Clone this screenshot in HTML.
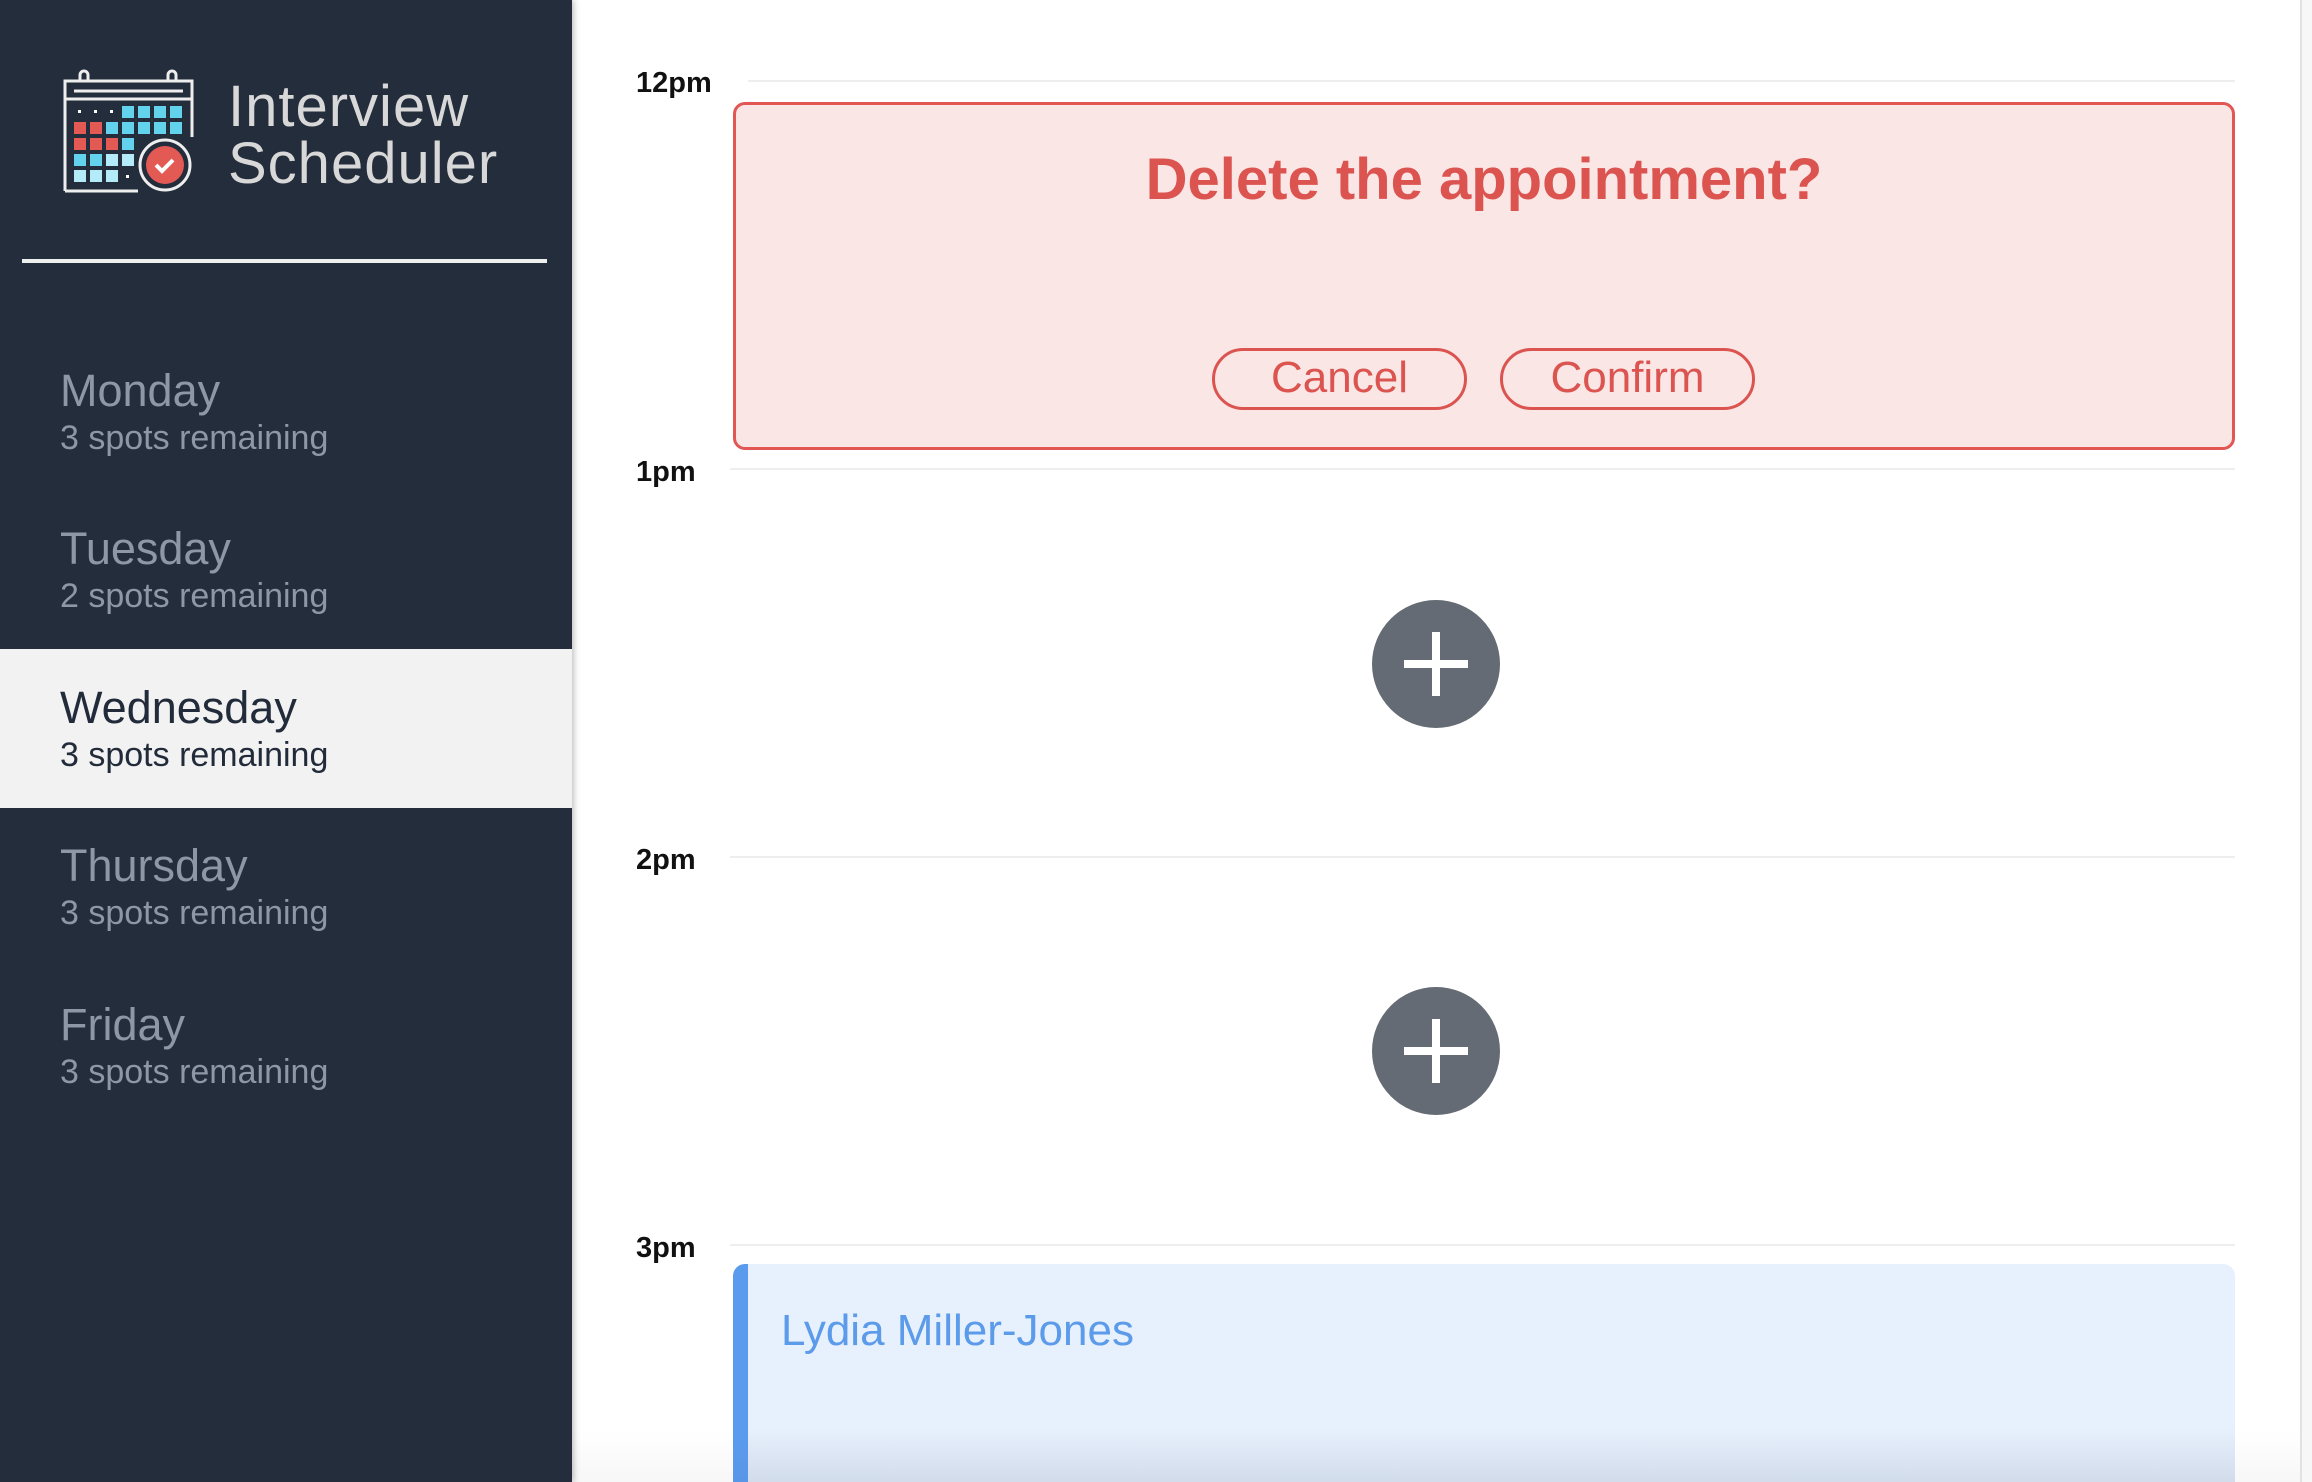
<!DOCTYPE html>
<html style="overflow:hidden"><head><meta charset="utf-8"><style>
*{margin:0;padding:0;box-sizing:border-box}
html,body{width:2312px;height:1482px;overflow:hidden}
body{background:#fff;font-family:"Liberation Sans",sans-serif;position:relative}
.side{position:absolute;left:0;top:0;width:572px;height:1482px;background:#242d3c;box-shadow:2px 0 6px rgba(0,0,0,.25)}
.logo-t{position:absolute;left:228px;top:78px;color:#d8d8d8;font-size:58px;line-height:57px;letter-spacing:1px}
.div{position:absolute;left:22px;top:259px;width:525px;height:4px;background:#eef0f0}
.day{position:absolute;left:0;width:572px;height:159px}
.day .n{position:absolute;left:60px;top:33px;font-size:45px;color:#8e97a5}
.day .s{position:absolute;left:60px;top:87px;font-size:34px;color:#8e97a5}
.day.act{background:#f2f2f2}
.day.act .n{color:#222b3a}.day.act .s{color:#222b3a}
.t{position:absolute;font-weight:bold;font-size:29px;color:#111}
.hl{position:absolute;left:730px;width:1505px;height:2px;background:#eeeeee}
.del{position:absolute;left:733px;top:102px;width:1502px;height:348px;border:3px solid #e05753;border-radius:12px;background:#fae6e5}
.del h1{position:absolute;left:0;right:0;top:41px;text-align:center;font-size:58px;color:#dc5450;font-weight:bold}
.btn{position:absolute;top:243px;width:255px;height:62px;border:3px solid #dc5450;border-radius:31px;color:#dc5450;font-size:44px;text-align:center;line-height:54px}
.plus{position:absolute;left:1372px;width:128px;height:128px;border-radius:50%;background:#656b74}
.plus:before{content:"";position:absolute;left:32px;top:60px;width:64px;height:8px;background:#fff}
.plus:after{content:"";position:absolute;left:60px;top:32px;width:8px;height:64px;background:#fff}
.appt{position:absolute;left:733px;top:1264px;width:1502px;height:218px;background:linear-gradient(#e7f0fd 75%,#d8e3f2);border-left:15px solid #5b9bee;border-radius:12px 12px 0 0}
.appt div{position:absolute;left:33px;top:42px;font-size:44px;color:#5b9bea}
.sb{position:absolute;left:2300px;top:0;width:12px;height:1482px;background:#f7f7f7;border-left:2px solid #e2e2e2}
</style></head><body>
<div class="side">
<svg style="position:absolute;left:0;top:0" width="230" height="230">
<g fill="none" stroke="#eee" stroke-width="3">
<path d="M65 191V81H192V137"/><path d="M65 191H138"/><path d="M74 91H183"/><path d="M65 99H192"/>
<path d="M80 81V75a4 4 0 0 1 8 0V81M168 81V75a4 4 0 0 1 8 0V81"/>
<circle cx="165" cy="165" r="25"/></g>
<circle cx="165" cy="165" r="19" fill="#e35a54"/>
<path d="M156 165l6 6 11-11" stroke="#fff" stroke-width="4" fill="none"/>
<g fill="#fff"><rect x="78" y="110" width="3" height="3"/><rect x="94" y="110" width="3" height="3"/><rect x="110" y="110" width="3" height="3"/><rect x="126" y="175" width="3" height="3"/></g>
<g fill="#63d2ec"><rect x="122" y="106" width="12" height="12"/><rect x="138" y="106" width="12" height="12"/><rect x="154" y="106" width="12" height="12"/><rect x="170" y="106" width="12" height="12"/>
<rect x="106" y="122" width="12" height="12"/><rect x="122" y="122" width="12" height="12"/><rect x="138" y="122" width="12" height="12"/><rect x="154" y="122" width="12" height="12"/><rect x="170" y="122" width="12" height="12"/>
<rect x="122" y="138" width="12" height="12"/><rect x="74" y="154" width="12" height="12"/><rect x="90" y="154" width="12" height="12"/></g>
<g fill="#e35a54"><rect x="74" y="122" width="12" height="12"/><rect x="90" y="122" width="12" height="12"/><rect x="74" y="138" width="12" height="12"/><rect x="90" y="138" width="12" height="12"/><rect x="106" y="138" width="12" height="12"/></g>
<g fill="#b3ecf8"><rect x="106" y="154" width="12" height="12"/><rect x="122" y="154" width="12" height="12"/><rect x="74" y="170" width="12" height="12"/><rect x="90" y="170" width="12" height="12"/><rect x="106" y="170" width="12" height="12"/></g>
</svg>
<div class="logo-t">Interview<br>Scheduler</div>
<div class="div"></div>
<div class="day" style="top:332px"><div class="n">Monday</div><div class="s">3 spots remaining</div></div>
<div class="day" style="top:490px"><div class="n">Tuesday</div><div class="s">2 spots remaining</div></div>
<div class="day act" style="top:649px"><div class="n">Wednesday</div><div class="s">3 spots remaining</div></div>
<div class="day" style="top:807px"><div class="n">Thursday</div><div class="s">3 spots remaining</div></div>
<div class="day" style="top:966px"><div class="n">Friday</div><div class="s">3 spots remaining</div></div>
</div>
<div class="t" style="left:636px;top:67px">12pm</div>
<div class="t" style="left:636px;top:456px">1pm</div>
<div class="t" style="left:636px;top:844px">2pm</div>
<div class="t" style="left:636px;top:1232px">3pm</div>
<div class="hl" style="top:80px;left:748px;width:1487px"></div>
<div class="hl" style="top:468px"></div>
<div class="hl" style="top:856px"></div>
<div class="hl" style="top:1244px"></div>
<div class="del"><h1>Delete the appointment?</h1>
<div class="btn" style="left:476px">Cancel</div><div class="btn" style="left:764px">Confirm</div></div>
<div class="plus" style="top:600px"></div>
<div class="plus" style="top:987px"></div>
<div class="appt"><div>Lydia Miller-Jones</div></div>
<div style="position:absolute;left:572px;top:1430px;width:1728px;height:52px;background:linear-gradient(rgba(0,0,0,0),rgba(0,0,0,.03))"></div>
<div class="sb"></div>
</body></html>
